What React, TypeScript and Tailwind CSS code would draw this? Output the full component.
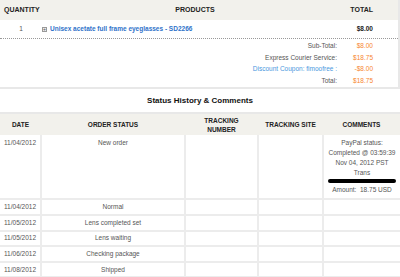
const rows = [
  { date: "11/04/2012", status: "Normal" },
  { date: "11/05/2012", status: "Lens completed set" },
  { date: "11/05/2012", status: "Lens waiting" },
  { date: "11/06/2012", status: "Checking package" },
  { date: "11/08/2012", status: "Shipped" },
];

const summary = [
  { label: "Sub-Total:", value: "$8.00", blue: false },
  { label: "Express Courier Service:", value: "$18.75", blue: false },
  { label: "Discount Coupon: fimoofree :", value: "-$8.00", blue: true },
  { label: "Total:", value: "$18.75", blue: false },
];

export default function App() {
  return (
    <div className="w-[400px] h-[277px] overflow-hidden bg-white text-[6.5px] text-[#555] font-['Liberation_Sans',Arial,sans-serif]">
      {/* order products */}
      <div className="border-r-2 border-b-2 border-[#e8e8e8]">
        <div className="flex items-center h-[20px] bg-[#f2f1ec] font-bold text-[#222] text-[7px]">
          <div className="w-[42px] pl-[4px]">QUANTITY</div>
          <div className="flex-1 text-center pl-[20px]">PRODUCTS</div>
          <div className="w-[70px] text-right pr-[25px]">TOTAL</div>
        </div>
        <div className="flex items-center h-[19px] border-b border-dotted border-[#999]">
          <div className="w-[42px] text-center">1</div>
          <div className="flex-1 flex items-center">
            <span className="w-[5px] h-[5px] border border-[#999] bg-[#eee] mr-[3px] flex items-center justify-center text-[5px] leading-none">+</span>
            <span className="font-bold text-[#2f72c9]">Unisex acetate full frame eyeglasses - SD2266</span>
          </div>
          <div className="w-[70px] text-right pr-[25px] font-bold text-[#222]">$8.00</div>
        </div>
        <div className="pt-[1px] pb-[1px]">
          {summary.map((s) => (
            <div key={s.label} className="flex items-center h-[11.6px]">
              <div className={`flex-1 text-right pr-[8px] ${s.blue ? "text-[#4a98de]" : "text-[#555]"}`}>{s.label}</div>
              <div className="w-[53px] text-right pr-[25px] text-[#f7862f]">{s.value}</div>
            </div>
          ))}
        </div>
      </div>

      <div className="h-[23px] flex items-center justify-center font-bold text-[8px] text-[#111]">
        Status History &amp; Comments
      </div>

      {/* status history */}
      <table className="w-full border-collapse table-fixed">
        <colgroup>
          <col className="w-[41px]" />
          <col className="w-[144px]" />
          <col className="w-[73px]" />
          <col className="w-[65px]" />
          <col />
        </colgroup>
        <thead>
          <tr className="h-[22px] bg-[#f2f1ec] font-bold text-[#222] text-[6.5px] leading-[9px] border-t-2 border-[#e8e8e8]">
            <th className="font-bold">DATE</th>
            <th className="font-bold">ORDER STATUS</th>
            <th className="font-bold">TRACKING<br />NUMBER</th>
            <th className="font-bold">TRACKING SITE</th>
            <th className="font-bold">COMMENTS</th>
          </tr>
        </thead>
        <tbody>
          <tr className="h-[64px] align-top border-b-2 border-[#ececec]">
            <td className="text-center pt-[3px]">11/04/2012</td>
            <td className="text-center pt-[3px] border-l-2 border-[#ececec]">New order</td>
            <td className="border-l-2 border-[#ececec]"></td>
            <td className="border-l-2 border-[#ececec]"></td>
            <td className="border-l-2 border-[#ececec] text-center pt-[3px] leading-[10px]">
              <div>PayPal status:</div>
              <div>Completed @ 03:59:39</div>
              <div>Nov 04, 2012 PST</div>
              <div>Trans</div>
              <div className="h-[4px] mx-[4px] mt-[1px] mb-[2px] bg-black rounded-full" />
              <div>Amount:&nbsp; 18.75 USD</div>
            </td>
          </tr>
          {rows.map((r, i) => (
            <tr key={i} className="h-[15.6px] border-b-2 border-[#ececec]">
              <td className="text-center">{r.date}</td>
              <td className="text-center border-l-2 border-[#ececec]">{r.status}</td>
              <td className="border-l-2 border-[#ececec]"></td>
              <td className="border-l-2 border-[#ececec]"></td>
              <td className="border-l-2 border-[#ececec]"></td>
            </tr>
          ))}
        </tbody>
      </table>
    </div>
  );
}
